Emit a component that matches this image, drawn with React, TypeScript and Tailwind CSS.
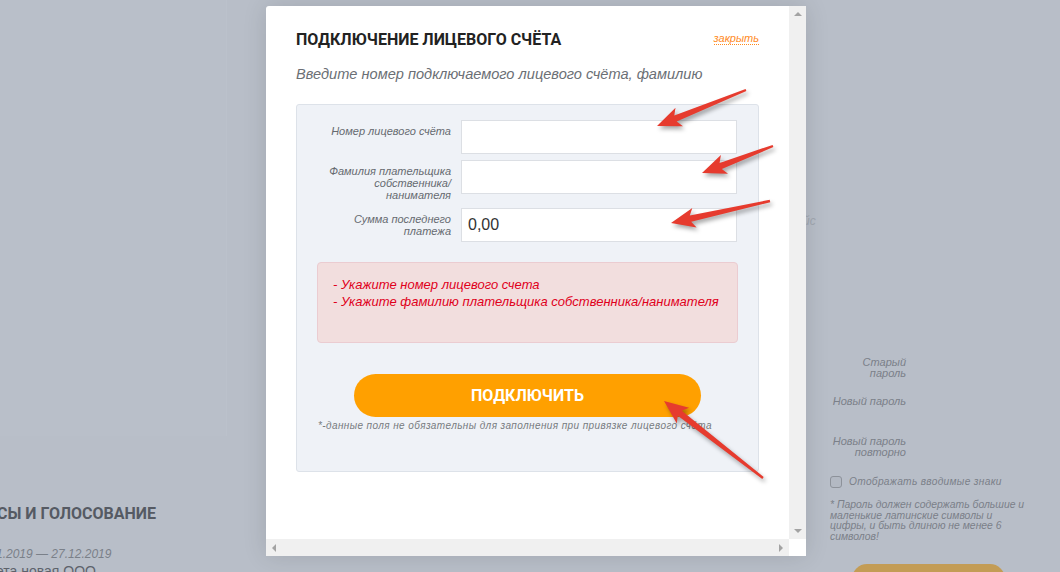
const arrows = [
  { tail: [746, 90], tip: [657, 126] },
  { tail: [773, 146], tip: [702, 173] },
  { tail: [770, 201], tip: [671, 223] },
  { tail: [763, 478], tip: [664, 401] },
];

function arrowPoints(tail: number[], tip: number[]) {
  const dx = tip[0] - tail[0];
  const dy = tip[1] - tail[1];
  const len = Math.sqrt(dx * dx + dy * dy);
  const ux = dx / len;
  const uy = dy / len;
  const nx = -uy;
  const ny = ux;
  const headLen = 24;
  const bx = tip[0] - ux * headLen;
  const by = tip[1] - uy * headLen;
  // notch slightly back from base
  const cx = bx + ux * 4;
  const cy = by + uy * 4;
  const pts = [
    [tail[0] + nx * 1.2, tail[1] + ny * 1.2],
    [cx + nx * 3.2, cy + ny * 3.2],
    [bx + nx * 10, by + ny * 10],
    [tip[0], tip[1]],
    [bx - nx * 10, by - ny * 10],
    [cx - nx * 3.2, cy - ny * 3.2],
    [tail[0] - nx * 1.2, tail[1] - ny * 1.2],
  ];
  return pts.map((p) => p[0].toFixed(1) + "," + p[1].toFixed(1)).join(" ");
}

const Field = ({ label, value }: { label: string; value?: string }) => (
  <div className="flex items-start pl-[29px]">
    <div className="w-[135px] shrink-0 pt-[5px] pr-[10px] text-right text-[11px] leading-[12px] italic text-[#666a70]">
      {label}
    </div>
    <div className="w-[276px] h-[34px] border border-[#dcdfe4] bg-white flex items-center pl-[6px] text-[16px] text-[#333] font-['Liberation_Sans',Arial,sans-serif]">
      {value}
    </div>
  </div>
);

const App = () => {
  return (
    <div className="relative w-[1060px] h-[572px] overflow-hidden bg-[#b8bec8] flex font-['Liberation_Sans',Arial,sans-serif]">
      {/* background page, left */}
      <div className="w-[227px] shrink-0">
        <div className="h-[436px] bg-[#b9bfc9] border-r border-[#bbc1cb]" />
        <div className="mt-[68px] -ml-[3px] text-[16px] leading-[20px] font-bold text-[#555a63] whitespace-nowrap font-['Roboto',sans-serif]">
          СЫ И ГОЛОСОВАНИЕ
        </div>
        <div className="mt-[22px] -ml-[4px] text-[12px] leading-[16px] italic text-[#7a8089] whitespace-nowrap">
          1.2019 — 27.12.2019
        </div>
        <div className="mt-[1px] -ml-[4px] text-[14px] leading-[16px] text-[#5d626b] whitespace-nowrap">
          ета новая ООО
        </div>
      </div>

      {/* background page, right */}
      <div className="ml-[603px] w-[230px] shrink-0 pt-[357px] text-[#7b8089] italic">
        <div className="w-[76px] text-right text-[11px] leading-[11px]">Старый пароль</div>
        <div className="mt-[17px] w-[76px] text-right text-[11px] leading-[11px]">Новый пароль</div>
        <div className="mt-[29px] w-[76px] text-right text-[11px] leading-[11px]">Новый пароль повторно</div>
        <div className="mt-[17px] flex items-center gap-[7px]">
          <div className="w-[12px] h-[12px] rounded-[3px] border border-[#8d929a] bg-[#b3b9c3]" />
          <span className="text-[10.2px] leading-[14px] tracking-[0.3px]">Отображать вводимые знаки</span>
        </div>
        <div className="mt-[11px] w-[200px] text-[10.4px] leading-[10.7px]">
          * Пароль должен содержать большие и маленькие латинские символы и цифры, и быть длиною не менее 6 символов!
        </div>
        <div className="mt-[21px] ml-[22px] w-[153px] h-[30px] rounded-full bg-[#c39c55]" />
      </div>

      <div className="absolute left-[803px] top-[212px] text-[12px] italic text-[#a2a8b1]">йс</div>

      {/* modal */}
      <div className="absolute left-[266px] top-[6px] w-[540px] h-[550px] bg-white rounded-tl-[3px] flex flex-col shadow-[0_0_24px_rgba(0,0,0,0.12)]">
        <div className="flex flex-1 min-h-0">
          <div className="flex-1 px-[30px] pt-[24px]">
            <div className="flex items-center justify-between h-[20px]">
              <div className="text-[16px] font-bold text-[#222] font-['Roboto',sans-serif]">
                ПОДКЛЮЧЕНИЕ ЛИЦЕВОГО СЧЁТА
              </div>
              <span className="text-[11px] leading-[12px] italic text-[#ff8a1e] border-b border-dotted border-[#ff8a1e] -mt-[4px]">
                закрыть
              </span>
            </div>
            <div className="mt-[14px] text-[14.6px] leading-[20px] italic text-[#6b6f75]">
              Введите номер подключаемого лицевого счёта, фамилию
            </div>

            <div className="mt-[20px] h-[368px] bg-[#eff2f7] border border-[#dde2e9] rounded-[3px] pt-[15px]">
              <div className="flex flex-col gap-[6px]">
                <Field label="Номер лицевого счёта" />
                <div className="pb-[1px]">
                  <Field label="Фамилия плательщика собственника/ нанимателя" />
                </div>
                <Field label="Сумма последнего платежа" value="0,00" />
              </div>

              <div className="mt-[20px] mx-[20px] h-[81px] bg-[#f2dede] border border-[#ebccd1] rounded-[4px] pl-[15px] pt-[13px] text-[13px] leading-[17px] italic text-[#e0001b]">
                <div>- Укажите номер лицевого счета</div>
                <div>- Укажите фамилию плательщика собственника/нанимателя</div>
              </div>

              <div className="mt-[31px] flex justify-center">
                <button className="w-[347px] h-[43px] rounded-full bg-[#ffa000] text-white text-[16px] font-bold font-['Roboto',sans-serif]">
                  ПОДКЛЮЧИТЬ
                </button>
              </div>
              <div className="mt-[3px] pl-[21px] text-[10px] leading-[12px] italic text-[#777b80] tracking-[0.4px] whitespace-nowrap">
                *-данные поля не обязательны для заполнения при привязке лицевого счёта
              </div>
            </div>
          </div>
          <div className="w-[17px] bg-[#f0f0f0] flex flex-col justify-between items-center py-[6px]">
            <div className="w-0 h-0 border-l-[4px] border-r-[4px] border-b-[4px] border-l-transparent border-r-transparent border-b-[#a3a3a3]" />
            <div className="w-0 h-0 border-l-[4px] border-r-[4px] border-t-[4px] border-l-transparent border-r-transparent border-t-[#a3a3a3]" />
          </div>
        </div>
        <div className="h-[17px] flex">
          <div className="flex-1 bg-[#f0f0f0] flex items-center justify-between px-[6px]">
            <div className="w-0 h-0 border-t-[4px] border-b-[4px] border-r-[4px] border-t-transparent border-b-transparent border-r-[#a3a3a3]" />
            <div className="w-0 h-0 border-t-[4px] border-b-[4px] border-l-[4px] border-t-transparent border-b-transparent border-l-[#a3a3a3]" />
          </div>
          <div className="w-[17px] bg-white" />
        </div>
      </div>

      {/* annotation arrows */}
      <svg
        className="absolute left-0 top-0 pointer-events-none drop-shadow-[2px_3px_2px_rgba(0,0,0,0.35)]"
        width="1060"
        height="572"
      >
        {arrows.map((a, i) => (
          <polygon key={i} points={arrowPoints(a.tail, a.tip)} fill="#e63b2e" />
        ))}
      </svg>
    </div>
  );
};

export default App;
